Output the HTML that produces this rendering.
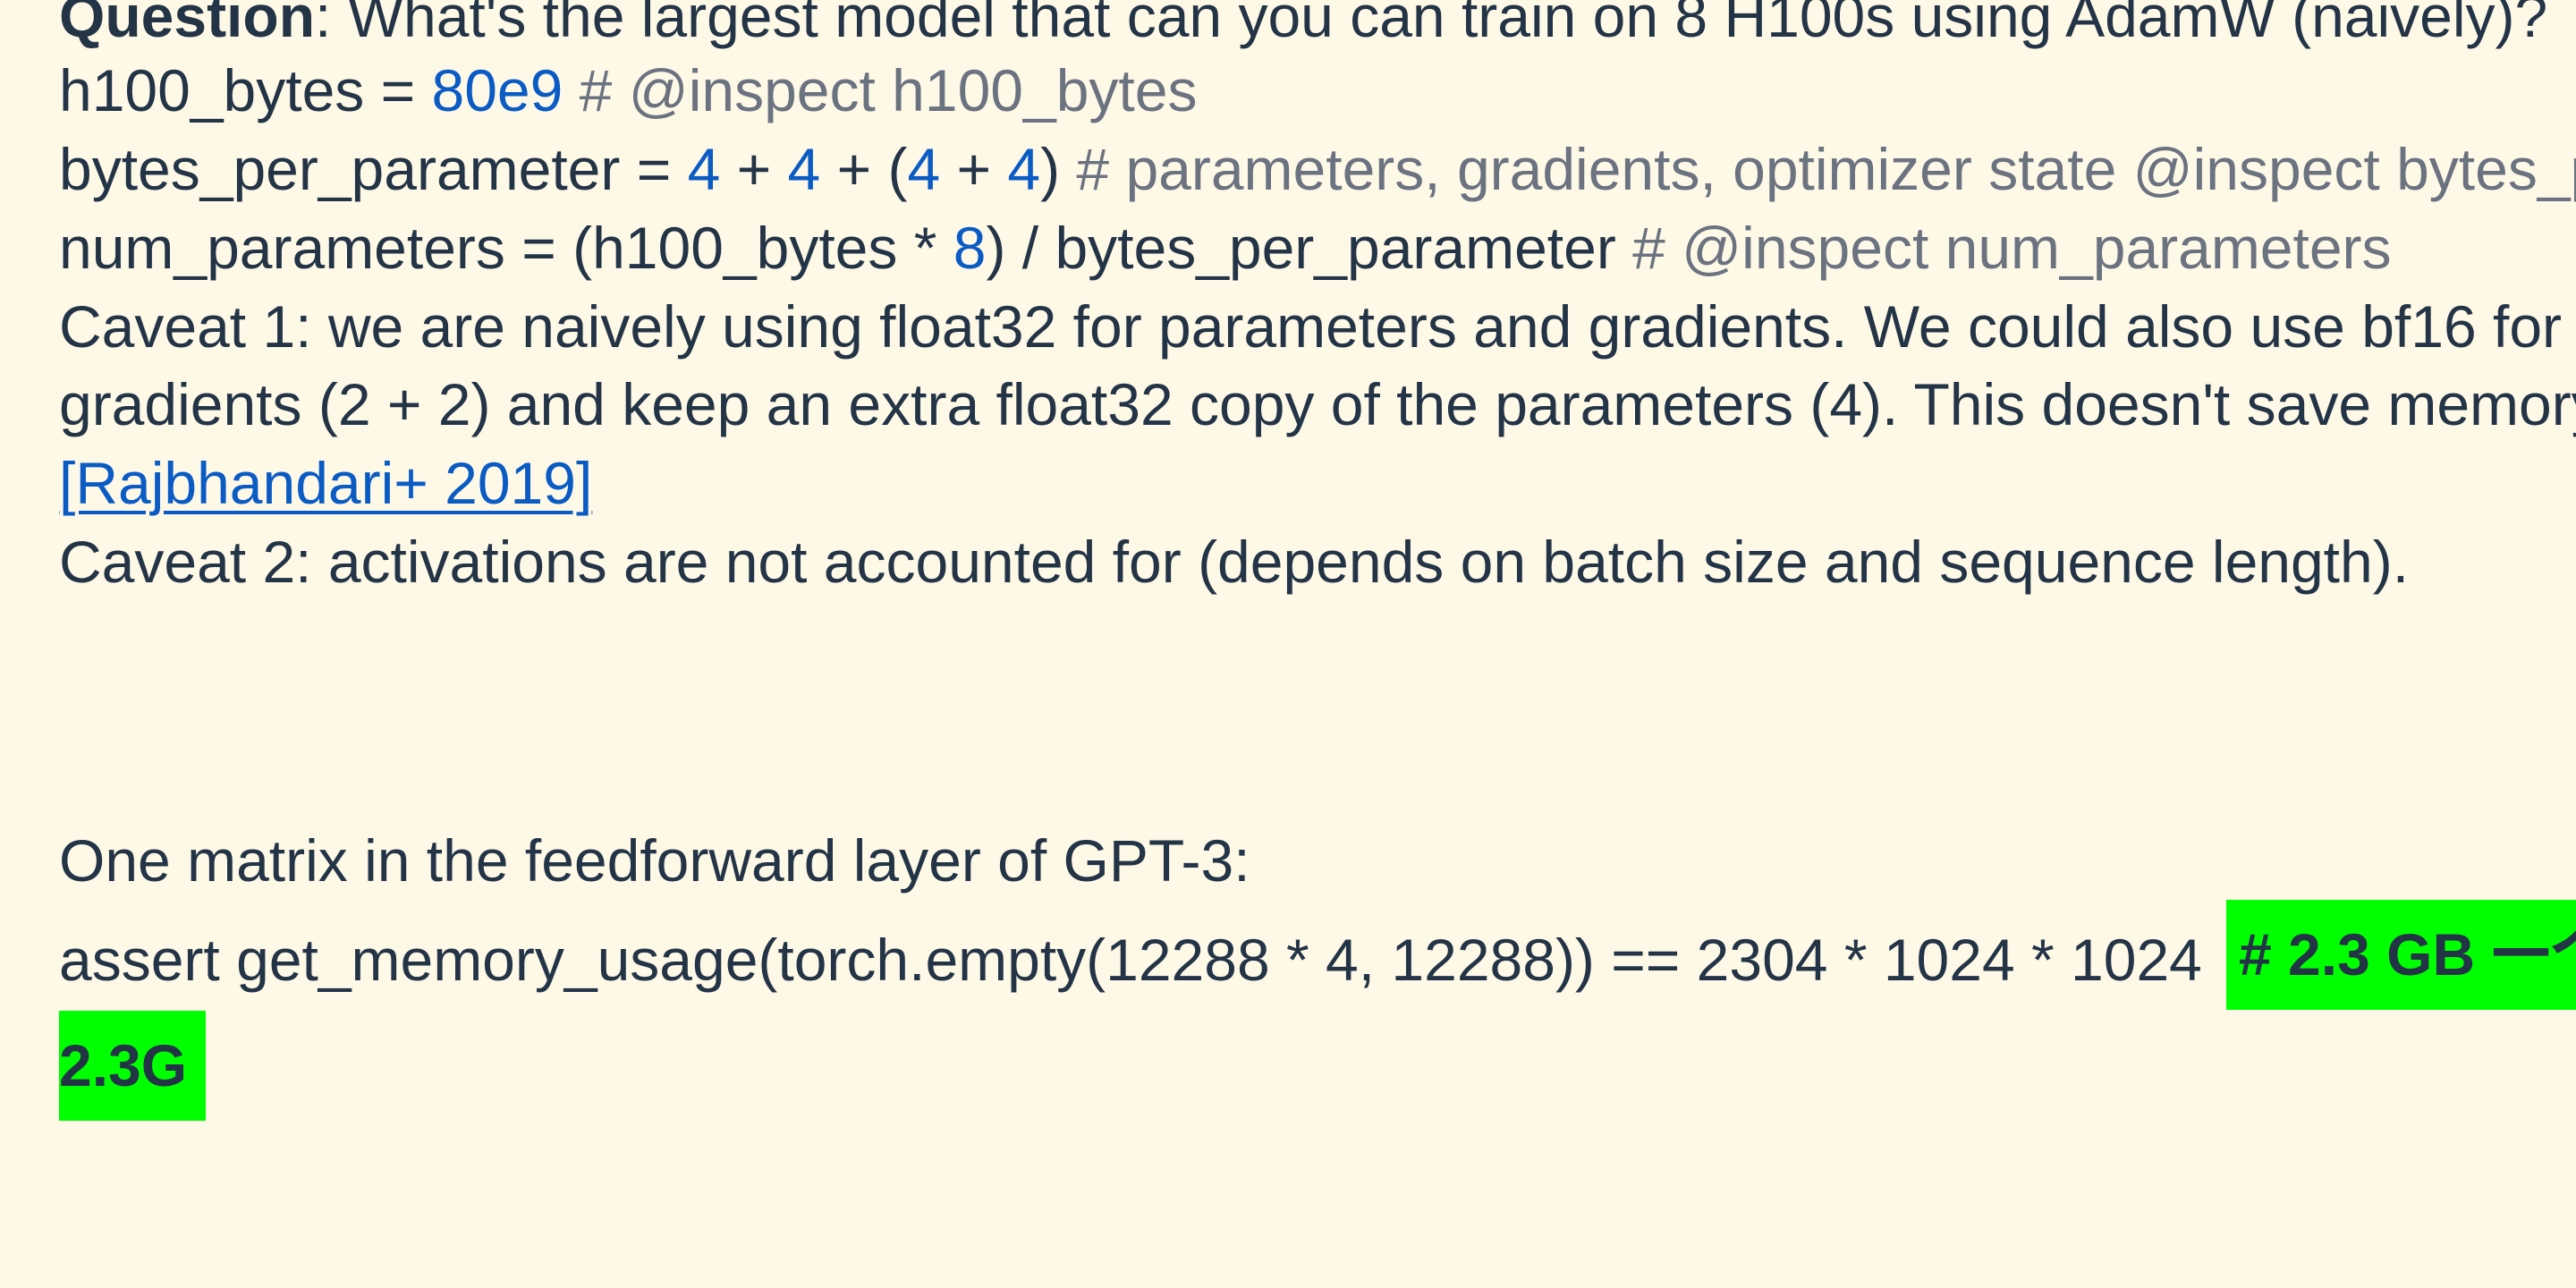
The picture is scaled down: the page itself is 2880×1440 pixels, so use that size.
<!DOCTYPE html>
<html><head><meta charset="utf-8"><style>
html,body{margin:0;padding:0;}
body{width:2880px;height:1440px;overflow:hidden;background:#fef8e6;position:relative;font-family:"Liberation Sans","Noto Sans CJK SC",sans-serif;font-size:66px;color:#233447;}
.l{position:absolute;left:66px;height:88px;line-height:88px;white-space:nowrap;}
.b{color:#0a5bc4}
.c{color:#6b7280}
a{color:#0a5bc4;text-decoration:underline;text-decoration-thickness:4px;text-underline-offset:8px}
.g{position:absolute;background:#00ff00;font-weight:bold;white-space:nowrap;line-height:123px;height:123px;overflow:hidden;}
</style></head><body>
<div class="l" style="top:-26px"><b>Question</b>: What's the largest model that can you can train on 8 H100s using AdamW (naively)?</div>
<div class="l" style="top:57px">h100_bytes = <span class="b">80e9</span> <span class="c"># @inspect h100_bytes</span></div>
<div class="l" style="top:145px">bytes_per_parameter = <span class="b">4</span> + <span class="b">4</span> + (<span class="b">4</span> + <span class="b">4</span>) <span class="c"># parameters, gradients, optimizer state @inspect bytes_per_parameter</span></div>
<div class="l" style="top:233px">num_parameters = (h100_bytes * <span class="b">8</span>) / bytes_per_parameter <span class="c"># @inspect num_parameters</span></div>
<div class="l" style="top:321px">Caveat 1: we are naively using float32 for parameters and gradients. We could also use bf16 for parameters and</div>
<div class="l" style="top:408px">gradients (2 + 2) and keep an extra float32 copy of the parameters (4). This doesn't save memory, but is faster.</div>
<div class="l" style="top:496px"><a>[Rajbhandari+ 2019]</a></div>
<div class="l" style="top:584px">Caveat 2: activations are not accounted for (depends on batch size and sequence length).</div>
<div class="l" style="top:918px">One matrix in the feedforward layer of GPT-3:</div>
<div class="l" style="top:1029px">assert get_memory_usage(torch.empty(12288 * 4, 12288)) == 2304 * 1024 * 1024</div>
<div class="g" style="left:2489px;top:1006px;width:400px;padding-left:14px"># 2.3 GB 一个矩阵就</div>
<div class="g" style="left:66px;top:1130px;width:164px">2.3G</div>
</body></html>
